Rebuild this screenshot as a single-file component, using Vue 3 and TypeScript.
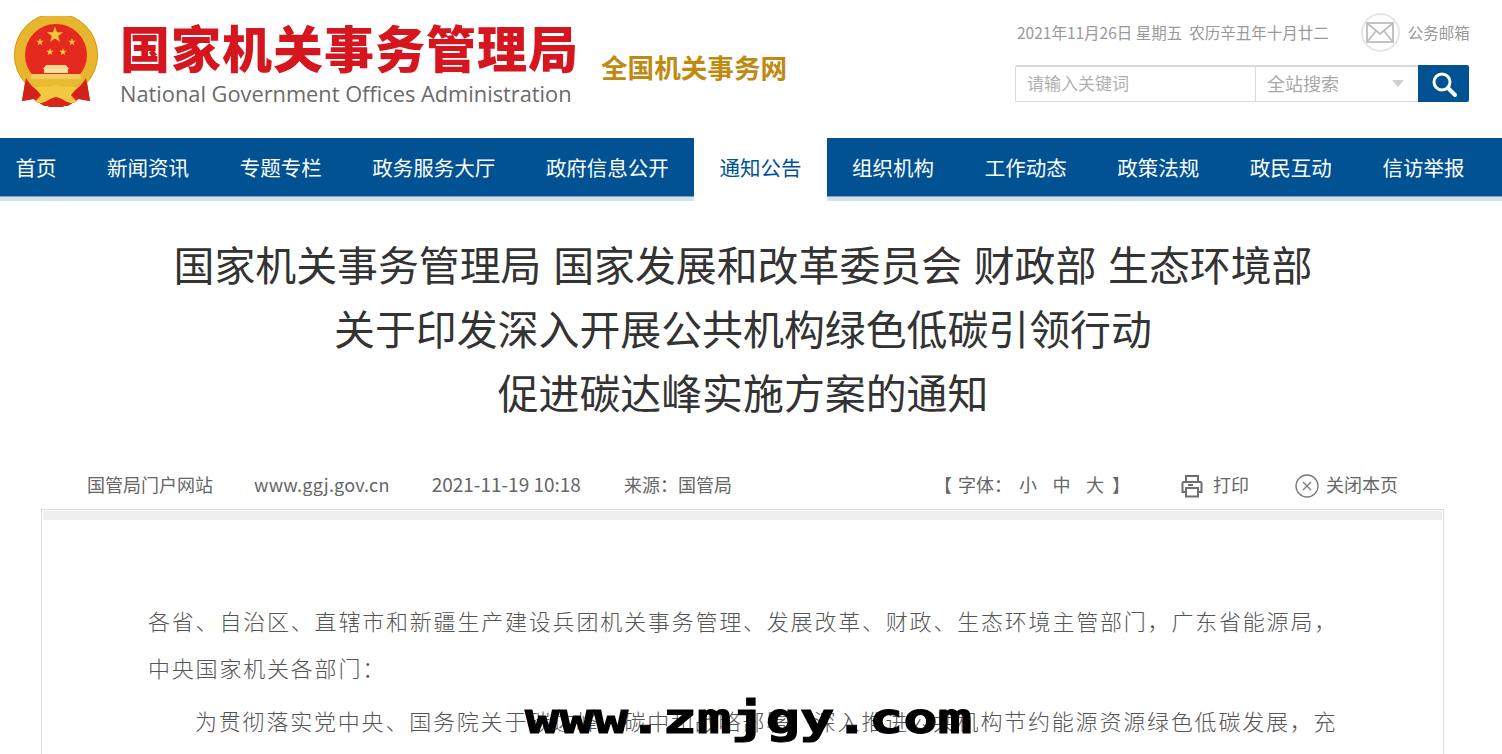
<script setup lang="ts">
const navItems = ['首页', '新闻资讯', '专题专栏', '政务服务大厅', '政府信息公开', '通知公告', '组织机构', '工作动态', '政策法规', '政民互动', '信访举报']
const activeNav = '通知公告'
const titleLines = [
  '国家机关事务管理局 国家发展和改革委员会 财政部 生态环境部',
  '关于印发深入开展公共机构绿色低碳引领行动',
  '促进碳达峰实施方案的通知',
]
const stars = [
  { x: 42, y: 19, r: 8.5 },
  { x: 27, y: 26, r: 4 },
  { x: 59, y: 26, r: 4 },
  { x: 37, y: 36, r: 4 },
  { x: 50, y: 36, r: 4 },
]
function starPoints(cx: number, cy: number, r: number) {
  const pts: string[] = []
  for (let i = 0; i < 10; i++) {
    const rad = i % 2 ? r * 0.4 : r
    const a = -Math.PI / 2 + (i * Math.PI) / 5
    pts.push(`${(cx + rad * Math.cos(a)).toFixed(2)},${(cy + rad * Math.sin(a)).toFixed(2)}`)
  }
  return pts.join(' ')
}
</script>

<template>
  <div class="page">
    <header class="top">
      <div class="brand">
        <svg class="emblem" width="86" height="92" viewBox="0 0 86 92">
          <path d="M13 60 L9 85 L20 83 L31 90 H55 L66 83 L77 85 L73 60 Z" fill="#d9261c" />
          <circle cx="43" cy="39" r="42" fill="#e9b52f" />
          <circle cx="43" cy="39" r="41.5" fill="none" stroke="#d89f20" stroke-width="1" />
          <circle cx="43" cy="39" r="31" fill="#e5291f" />
          <polygon v-for="(s, i) in stars" :key="i" :points="starPoints(s.x, s.y, s.r)" fill="#f3c63c" />
          <path d="M33 49 H53 L56 53 H30 Z" fill="#f4d98a" />
          <path d="M31 53 H55 V57 H31 Z" fill="#f6e3a6" />
          <path d="M18 58 H68 V63 H18 Z" fill="#f2cd62" />
          <path d="M14 63 H72 L60 72 H26 Z" fill="#eab92f" />
          <path d="M13 62 L9 85 L20 83 L29 76 C22 74 17 69 13 62 Z M73 62 L77 85 L66 83 L57 76 C64 74 69 69 73 62 Z" fill="#d2211a" />
          <path d="M22 72 C28 68 33 73 43 69 C53 73 58 68 64 72 L58 79 L64 86 C56 90 50 82 43 81 C36 82 30 90 22 86 L28 79 Z" fill="#f1c840" />
          <path d="M31 87 L43 82 L55 87 L50 91 H36 Z" fill="#d9261c" />
        </svg>
        <div class="brand-text">
          <div class="brand-cn">国家机关事务管理局</div>
          <div class="brand-en">National Government Offices Administration</div>
        </div>
        <div class="brand-sub">全国机关事务网</div>
      </div>
      <div class="tools">
        <div class="tools-row">
          <span class="date">2021年11月26日 星期五&nbsp; 农历辛丑年十月廿二</span>
          <span class="mail-circle">
            <svg width="28" height="21" viewBox="0 0 28 21" fill="none" stroke="#bdbdbd" stroke-width="1.8">
              <rect x="1" y="1" width="26" height="19" />
              <path d="M1 1 L14 12 L27 1 M1 20 L10 9 M27 20 L18 9" />
            </svg>
          </span>
          <span class="mail-text">公务邮箱</span>
        </div>
        <div class="search">
          <div class="search-input">请输入关键词</div>
          <div class="search-scope">
            <span>全站搜索</span>
            <i class="caret"></i>
          </div>
          <div class="search-btn">
            <svg width="28" height="28" viewBox="0 0 28 28" fill="none" stroke="#fff">
              <circle cx="12" cy="12" r="8" stroke-width="3" />
              <path d="M18 18 L25 25" stroke-width="4" stroke-linecap="round" />
            </svg>
          </div>
        </div>
      </div>
    </header>

    <nav class="nav">
      <a v-for="item in navItems" :key="item" class="nav-item" :class="{ active: item === activeNav }">{{ item }}</a>
    </nav>

    <h1 class="title">
      <span v-for="line in titleLines" :key="line" class="title-line">{{ line }}</span>
    </h1>

    <div class="meta">
      <div class="meta-left">
        <span>国管局门户网站</span>
        <span class="site">www.ggj.gov.cn</span>
        <span class="stamp">2021-11-19 10:18</span>
        <span>来源：国管局</span>
      </div>
      <div class="meta-right">
        <span class="font-size">
          <span>【</span>
          <span class="font-label">字体：</span>
          <b>小</b><b>中</b><b>大</b>
          <span class="font-end">】</span>
        </span>
        <span class="meta-action print">
          <svg width="24" height="24" viewBox="0 0 24 24" fill="none" stroke="#6e6e6e" stroke-width="2">
            <path d="M6 8 V2 H18 V8" />
            <path d="M6 18 H2.5 V9.5 Q2.5 8 4 8 H20 Q21.5 8 21.5 9.5 V18 H18" />
            <path d="M6 14 H18 V22.5 H6 Z" />
            <path d="M8 11 H13" />
          </svg>
          打印
        </span>
        <span class="meta-action close">
          <svg width="24" height="24" viewBox="0 0 24 24" fill="none" stroke="#7a7a7a" stroke-width="1.3">
            <circle cx="12" cy="12" r="11" />
            <path d="M8 8 L16 16 M16 8 L8 16" />
          </svg>
          关闭本页
        </span>
      </div>
    </div>

    <article class="article">
      <div class="article-bar"></div>
      <div class="article-body">
        <p>各省、自治区、直辖市和新疆生产建设兵团机关事务管理、发展改革、财政、生态环境主管部门，广东省能源局，中央国家机关各部门：</p>
        <p class="indent">为贯彻落实党中央、国务院关于碳达峰、碳中和战略部署，深入推进公共机构节约能源资源绿色低碳发展，充</p>
      </div>
    </article>

    <div class="watermark">www.zmjgy.com</div>
  </div>
</template>

<style scoped>
.page { position: relative; height: 754px; overflow: hidden; background: #fff; font-family: "Noto Sans CJK SC", "Noto Sans", sans-serif; }
.top { display: flex; justify-content: space-between; height: 138px; box-sizing: border-box; padding: 12px 33px 0 13px; }
.brand { display: flex; align-items: flex-start; }
.emblem { margin-top: 4px; }
.brand-text { margin-left: 21px; margin-top: 5px; width: 456px; }
.brand-cn { font-size: 50px; line-height: 58px; font-weight: 900; color: #d5161f; letter-spacing: 1px; white-space: nowrap; }
.brand-en { margin-top: 4px; font-family: "Open Sans", "Noto Sans", sans-serif; font-size: 21.8px; line-height: 30px; color: #6a6a6a; white-space: nowrap; }
.brand-sub { margin-left: 25px; margin-top: 37px; font-size: 26.6px; line-height: 36px; font-weight: 700; color: #bf8a12; white-space: nowrap; }
.tools { width: 454px; }
.tools-row { display: flex; align-items: center; height: 40px; font-size: 15.5px; color: #999; }
.date { margin-left: 2px; white-space: nowrap; }
.mail-circle { flex: none; width: 39px; height: 39px; margin-left: 32px; box-sizing: border-box; border: 2px solid #e6e6e6; border-radius: 50%; display: flex; align-items: center; justify-content: center; }
.mail-text { margin-left: 8px; white-space: nowrap; }
.search { display: flex; height: 37px; margin-top: 13px; color: #b0b0b0; }
.search-input { width: 240px; box-sizing: border-box; border: 1px solid #d8d8d8; border-top-width: 2px; border-right: 0; padding-left: 11px; font-size: 17px; line-height: 32px; border-radius: 2px 0 0 2px; }
.search-scope { width: 163px; box-sizing: border-box; border: 1px solid #d8d8d8; border-top-width: 2px; border-right: 0; padding: 0 0 2px 11px; font-size: 18px; line-height: 31px; display: flex; align-items: center; justify-content: space-between; color: #a8a8a8; }
.caret { width: 0; height: 0; margin-right: 14px; border: 6px solid transparent; border-top: 7px solid #cfcfcf; border-bottom: 0; }
.search-btn { width: 51px; background: #005293; border-radius: 0 2px 2px 0; display: flex; align-items: center; justify-content: center; }
.nav { display: flex; height: 59px; background: #005293; border-bottom: 4px solid #d6e0ea; box-shadow: inset 0 -1px 0 #7d9fc0; }
.nav-item { padding: 0 25.3px; font-size: 20.5px; line-height: 58px; color: #fff; white-space: nowrap; }
.nav-item:first-child { padding-left: 15.5px; }
.nav-item.active { height: 63px; background: #fff; color: #005293; }
.title { margin: 31px 16px 0 0; display: flex; flex-direction: column; align-items: center; font-size: 40.9px; line-height: 64px; font-weight: 400; color: #333; word-spacing: 2.5px; }
.title-line { white-space: nowrap; }
.meta { display: flex; justify-content: space-between; margin: 48px 104px 0 87px; height: 37px; font-size: 18px; line-height: 24px; color: #666; }
.meta-left { display: flex; gap: 42px; white-space: nowrap; }
.site { margin-left: -1px; letter-spacing: 0.2px; }
.stamp { font-size: 19px; margin-right: 1px; }
.meta-right { display: flex; white-space: nowrap; }
.font-size { display: flex; }
.font-label { margin-left: 6px; }
.font-size b { font-weight: 400; margin-left: 15.5px; }
.font-size b:first-of-type { margin-left: 7px; }
.font-end { margin-left: 8px; }
.meta-action { display: flex; align-items: flex-start; }
.print { margin-left: 50px; gap: 9px; }
.close { margin-left: 46px; gap: 7px; }
.meta-action svg { margin-top: 2px; }
.article { margin: 0 58px 0 41px; border: 1px solid #dcdcdc; border-bottom: 0; }
.article-bar { height: 9px; margin: 1px; background: #efefef; }
.article-body { padding: 76px 105px 60px 106px; font-size: 22px; font-weight: 300; letter-spacing: 1.8px; line-height: 47px; color: #555; }
.article-body p { margin: 0; }
.article-body .indent { margin-top: 6px; text-indent: 47px; }
.watermark { position: absolute; left: 525px; top: 684px; font-family: "DejaVu Sans Mono", monospace; font-size: 42px; line-height: 70px; font-weight: 700; color: #000; white-space: nowrap; transform: scaleX(1.36); transform-origin: left center; -webkit-text-stroke: 1px #000; }
</style>

<style>
html, body { margin: 0; overflow: hidden; }
</style>
